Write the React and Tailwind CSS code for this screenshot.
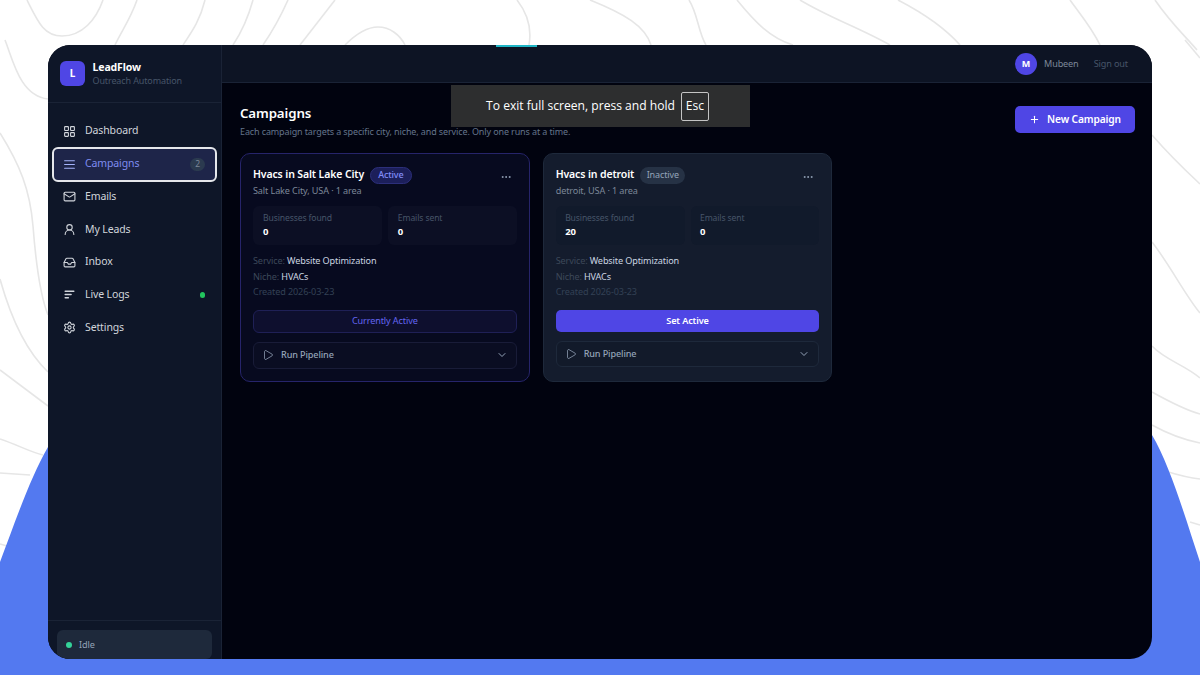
import React from "react";
import { LayoutGrid, AlignJustify, Mail, UserRound, Inbox, Settings, Play, ChevronDown, Ellipsis, Plus } from "lucide-react";

const font = "font-['Noto_Sans',sans-serif] tracking-[-0.12px]";

function LogsIcon({ className }) {
  return (
    <svg viewBox="0 0 24 24" fill="none" stroke="currentColor" strokeWidth="2.6" strokeLinecap="round" className={className}>
      <path d="M4 6h16M4 12h11M4 18h6" />
    </svg>
  );
}

function Background() {
  const lines = [
    "M27 0C38 22 44 36 62 36C82 36 96 20 103 0",
    "M137 0C130 20 122 30 115 45",
    "M205 0C200 20 193 30 183 45",
    "M253 0C248 18 243 30 233 45",
    "M288 0C280 18 272 32 263 45",
    "M335 0L300 45",
    "M345 45C358 32 368 27 378 27C390 27 400 35 405 45",
    "M517 0C528 14 532 28 529 45",
    "M590 0C625 14 645 26 651 45",
    "M689 0C698 14 698 32 706 45",
    "M737 0C755 22 770 38 793 45",
    "M800 0C830 18 860 28 890 45",
    "M898 0C925 14 945 28 960 45",
    "M1070 0C1080 14 1092 28 1100 45",
    "M1155 0C1170 22 1185 36 1197 50",
    "M5 40C13 60 20 96 48 99",
    "M0 133C20 165 30 190 33 226C36 265 40 295 48 315",
    "M0 279C10 315 25 350 48 372",
    "M0 370L48 406",
    "M0 439C18 445 30 452 43 455",
    "M0 473L30 475",
    "M0 544L7 546",
    "M1185 40L1200 58",
    "M1152 135C1165 150 1185 170 1200 184",
    "M1152 242C1170 265 1185 295 1200 313",
    "M1152 346C1165 360 1185 365 1200 378",
    "M1152 392C1170 402 1185 410 1200 414",
    "M1152 425C1170 435 1185 440 1200 443",
    "M1165 471C1178 475 1190 478 1200 479",
    "M1190 522L1200 525",
  ];
  return (
    <svg viewBox="0 0 1200 675" className="absolute inset-0 w-[1200px] h-[675px]">
      <rect width="1200" height="675" fill="#ffffff" />
      {lines.map((d, i) => (
        <path key={i} d={d} fill="none" stroke="#e6e6e6" strokeWidth="1.6" />
      ))}
      <path d="M0 562C14 525 30 478 48 447L60 420H1140L1152 435C1170 465 1186 520 1200 562V675H0Z" fill="#5379f0" />
    </svg>
  );
}

function NavItem({ icon: Icon, label, active, badge, dot }) {
  return (
    <div
      className={
        active
          ? "mx-[4px] my-[-1.15px] h-[35px] flex items-center pl-[9px] pr-[10px] rounded-[6px] bg-[#1e2549] border-2 border-[#e5e7eb]"
          : "mx-[4px] h-[32.7px] flex items-center pl-[11px] pr-[13px] text-[#d1d5db]"
      }
    >
      <Icon className={active ? "w-[13px] h-[13px] text-[#a5b4fc] shrink-0" : "w-[13px] h-[13px] text-[#d1d5db] shrink-0"} strokeWidth={2} />
      <span className={active ? "ml-[9px] text-[10.5px] text-[#7f8cf0]" : "ml-[9px] text-[10.5px]"}>{label}</span>
      {badge && (
        <span className="ml-auto w-[15px] h-[13px] rounded-full bg-[#2b3a4f] text-[#7b8798] text-[8.5px] flex items-center justify-center">
          {badge}
        </span>
      )}
      {dot && <span className="ml-auto mr-[-1px] w-[5.5px] h-[5.5px] rounded-full bg-[#22c55e]" />}
    </div>
  );
}

function Sidebar() {
  return (
    <aside className="w-[174px] shrink-0 bg-[#0e1628] border-r border-[#1a2336] flex flex-col h-full">
      <div className="h-[58px] shrink-0 border-b border-[#1a2336] flex items-center pl-[12px] gap-[7.5px]">
        <div className="w-[25px] h-[25px] rounded-[6px] bg-[#4f46e5] text-white text-[10px] font-bold flex items-center justify-center">L</div>
        <div className="flex flex-col">
          <span className="text-[10.5px] leading-[13px] font-bold text-white">LeadFlow</span>
          <span className="text-[9px] leading-[13px] text-[#475569]">Outreach Automation</span>
        </div>
      </div>
      <nav className="pt-[12px] flex flex-col">
        <NavItem icon={LayoutGrid} label="Dashboard" />
        <NavItem icon={AlignJustify} label="Campaigns" active badge="2" />
        <NavItem icon={Mail} label="Emails" />
        <NavItem icon={UserRound} label="My Leads" />
        <NavItem icon={Inbox} label="Inbox" />
        <NavItem icon={LogsIcon} label="Live Logs" dot />
        <NavItem icon={Settings} label="Settings" />
      </nav>
      <div className="mt-auto h-[39px] border-t border-[#1a2336] px-[9px] pt-[9px]">
        <div className="h-[29px] rounded-[6px] bg-[#1e293b] flex items-center pl-[9px] gap-[7px]">
          <span className="w-[6px] h-[6px] rounded-full bg-[#34d399]" />
          <span className="text-[9.1px] text-[#94a3b8]">Idle</span>
        </div>
      </div>
    </aside>
  );
}

function Stat({ label, value, tone }) {
  return (
    <div className={tone === "active" ? "flex-1 h-[39px] rounded-[6px] bg-[#0c0f24] pl-[10px] pt-[6px]" : "flex-1 h-[39px] rounded-[6px] bg-[#111a2b] pl-[9.5px] pt-[6px]"}>
      <div className="text-[8.6px] leading-[13px] text-[#475569]">{label}</div>
      <div className="text-[9.5px] leading-[14px] font-bold text-white">{value}</div>
    </div>
  );
}

function Card({ active, title, sub, found }) {
  return (
    <div className={active ? "h-[229px] rounded-[10px] border border-[#26246a] bg-[#070a1f] px-[12px] pt-[12px]" : "h-[229px] rounded-[10px] border border-[#1e293b] bg-[#141c2d] px-[12px] pt-[12px]"}>
      <div className="flex items-start justify-between h-[18px]">
        <div className="flex items-center gap-[6px] h-[18px]">
          <span className="text-[10.5px] font-semibold text-white">{title}</span>
          {active ? (
            <span className="h-[17px] px-[7px] rounded-full bg-[#1c1f5a] border border-[#2c2f7a] text-[#818cf8] text-[9px] font-medium flex items-center">Active</span>
          ) : (
            <span className="h-[17px] px-[6.5px] rounded-full bg-[#263245] text-[#94a3b8] text-[9px] flex items-center">Inactive</span>
          )}
        </div>
        <Ellipsis className="w-[12px] h-[12px] mt-[5px] mr-[5px] text-[#94a3b8]" strokeWidth={2} />
      </div>
      <div className="text-[9.1px] leading-[12px] mt-[1px] text-[#7c8798]">{sub}</div>
      <div className="flex gap-[6px] mt-[9px]">
        <Stat label="Businesses found" value={found} tone={active ? "active" : "inactive"} />
        <Stat label="Emails sent" value="0" tone={active ? "active" : "inactive"} />
      </div>
      <div className="mt-[8px] text-[9.1px] leading-[15.5px] text-[#3d4859]">
        <div>Service: <span className="text-[#cbd5e1]">Website Optimization</span></div>
        <div>Niche: <span className="text-[#cbd5e1]">HVACs</span></div>
        <div className="text-[#334155]">Created 2026-03-23</div>
      </div>
      {active ? (
        <div className="mt-[10px] h-[23px] rounded-[6px] border border-[#1f2056] bg-[#0e0f2e] flex items-center justify-center text-[9.1px] text-[#6366f1]">Currently Active</div>
      ) : (
        <div className="mt-[10px] h-[22px] rounded-[5px] bg-[#4f46e5] flex items-center justify-center text-[9.1px] font-semibold text-white">Set Active</div>
      )}
      <div className={active ? "mt-[9px] h-[27px] rounded-[6px] border border-[#191c38] bg-[#0a0d22] flex items-center pl-[8px] pr-[8px]" : "mt-[9px] h-[26px] rounded-[6px] border border-[#1e293b] bg-[#121a2a] flex items-center pl-[8px] pr-[8px]"}>
        <Play className="w-[12px] h-[12px] text-[#94a3b8]" strokeWidth={1.5} />
        <span className="ml-[7px] text-[9.1px] font-medium text-[#94a3b8]">Run Pipeline</span>
        <ChevronDown className="ml-auto w-[12px] h-[12px] text-[#94a3b8]" strokeWidth={2} />
      </div>
    </div>
  );
}

export default function App() {
  return (
    <div className={"relative w-[1200px] h-[675px] overflow-hidden pl-[48px] pr-[48px] pt-[45px] pb-[16px] " + font}>
      <Background />
      <div className="relative h-full rounded-[22px] overflow-hidden flex bg-[#01030f]">
        <Sidebar />
        <div className="flex-1 flex flex-col min-w-0">
          <header className="h-[38px] shrink-0 bg-[#0d1424] border-b border-[#1a2336] flex items-center justify-end pr-[24px]">
            <div className="w-[22px] h-[22px] rounded-full bg-[#4f46e5] text-white text-[9px] font-bold flex items-center justify-center">M</div>
            <span className="ml-[7px] text-[9.1px] text-[#7c8798]">Mubeen</span>
            <span className="ml-[15px] text-[9.1px] text-[#475569]">Sign out</span>
          </header>
          <main className="flex-1 pl-[18px] pr-[17px] pt-[22px]">
            <div className="flex items-start justify-between">
              <div>
                <h1 className="text-[13.3px] leading-[17px] font-semibold text-white">Campaigns</h1>
                <p className="text-[9px] leading-[13px] mt-[3px] text-[#64748b]">Each campaign targets a specific city, niche, and service. Only one runs at a time.</p>
              </div>
              <div className="w-[120px] h-[27px] mt-[1px] rounded-[5px] bg-[#4f46e5] flex items-center justify-center gap-[7px] text-white text-[10.2px] font-semibold">
                <Plus className="w-[11px] h-[11px]" strokeWidth={2.2} />
                New Campaign
              </div>
            </div>
            <div className="grid grid-cols-3 gap-[13px] mt-[15px]">
              <Card active title="Hvacs in Salt Lake City" sub="Salt Lake City, USA · 1 area" found="0" />
              <Card title="Hvacs in detroit" sub="detroit, USA · 1 area" found="20" />
            </div>
          </main>
        </div>
        <div className="absolute left-[448px] top-0 w-[41px] h-[1.5px] bg-[#1fb6c6]" />
      </div>
      <div className="absolute left-[451px] top-[85px] w-[299px] h-[42px] pr-[6px] bg-[#2d2e2f] flex items-center justify-center gap-[6px] text-white text-[12.1px] tracking-normal font-['Open_Sans',sans-serif]">
        <span>To exit full screen, press and hold</span>
        <span className="w-[28px] h-[29px] border border-[#c4c4c4] rounded-[2px] flex items-center justify-center">Esc</span>
      </div>
    </div>
  );
}
